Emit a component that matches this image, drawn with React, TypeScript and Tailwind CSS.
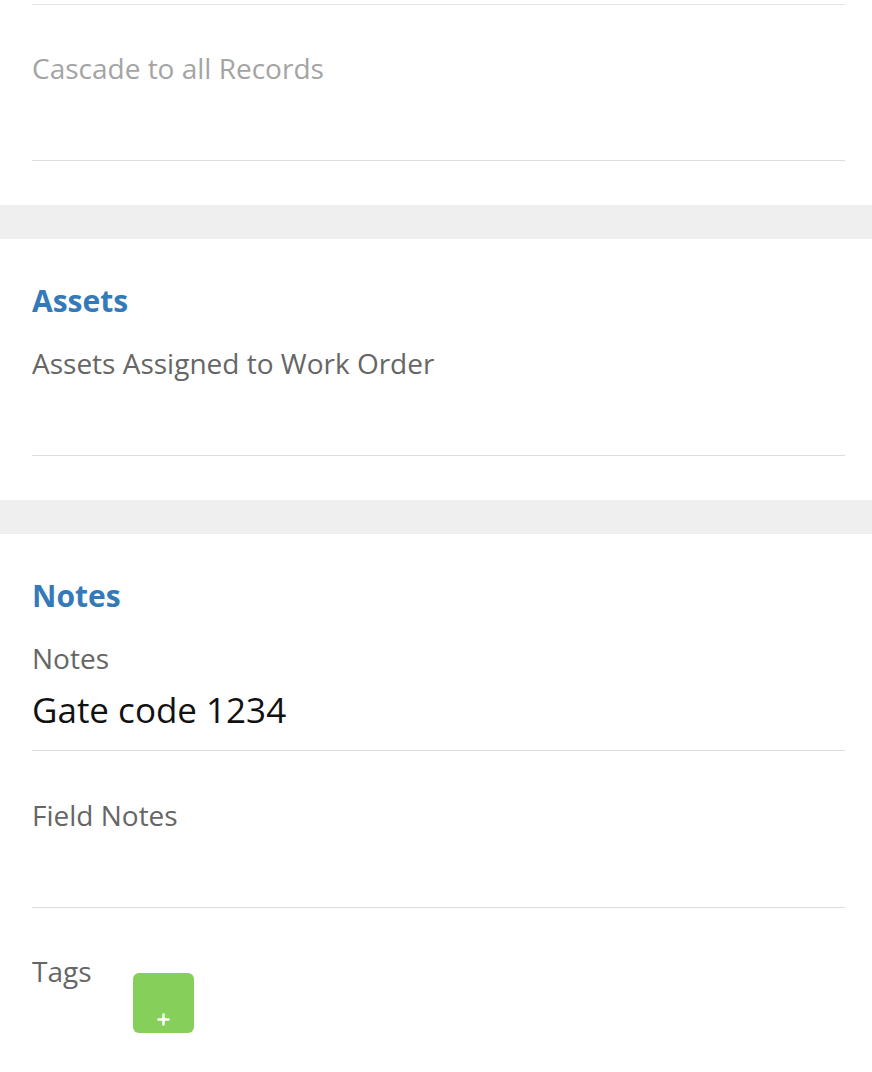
import { Plus } from 'lucide-react';

const font = { fontFamily: '"Open Sans", "Noto Sans", sans-serif' };

function Field({ label, value, first, muted }: { label: string; value?: string; first?: boolean; muted?: boolean }) {
  return (
    <div className={`ml-8 mr-[27px] border-b border-[#dcdcdc] pb-5 ${first ? 'pt-[26px]' : 'pt-[45px]'}`}>
      <div className={`text-[28px] leading-[36px] ${muted ? 'text-[#a4a4a4]' : 'text-[#666666]'}`}>{label}</div>
      <div className="mt-[14px] h-10 text-[35px] leading-[40px] text-[#111111]">{value}</div>
    </div>
  );
}

function Band() {
  return <div className="h-[34px] bg-[#efefef]" />;
}

function SectionTitle({ children }: { children: string }) {
  return (
    <h2 className="ml-8 pt-[44px] text-[30px] font-bold leading-[36px] text-[#357ab8]">{children}</h2>
  );
}

export default function App() {
  return (
    <div className="min-h-screen overflow-hidden bg-white" style={font}>
      <div className="h-1" />
      <div className="ml-8 mr-[27px] border-t border-[#e4e4e4]" />
      <div className="pb-[44px]">
        <Field label="Cascade to all Records" muted />
      </div>

      <Band />
      <div className="pb-[44px]">
        <SectionTitle>Assets</SectionTitle>
        <Field label="Assets Assigned to Work Order" first />
      </div>

      <Band />
      <div>
        <SectionTitle>Notes</SectionTitle>
        <Field label="Notes" value="Gate code 1234" first />
        <div className="pt-px">
          <Field label="Field Notes" />
        </div>
        <div className="ml-8 flex items-start pt-[45px]">
          <div className="text-[28px] leading-[36px] text-[#666666]">Tags</div>
          <button className="ml-[41px] mt-5 flex h-[60px] w-[61px] justify-center rounded-md bg-[#86cf5b] pt-[38px] text-white">
            <Plus size={17} strokeWidth={3.5} />
          </button>
        </div>
      </div>
    </div>
  );
}
